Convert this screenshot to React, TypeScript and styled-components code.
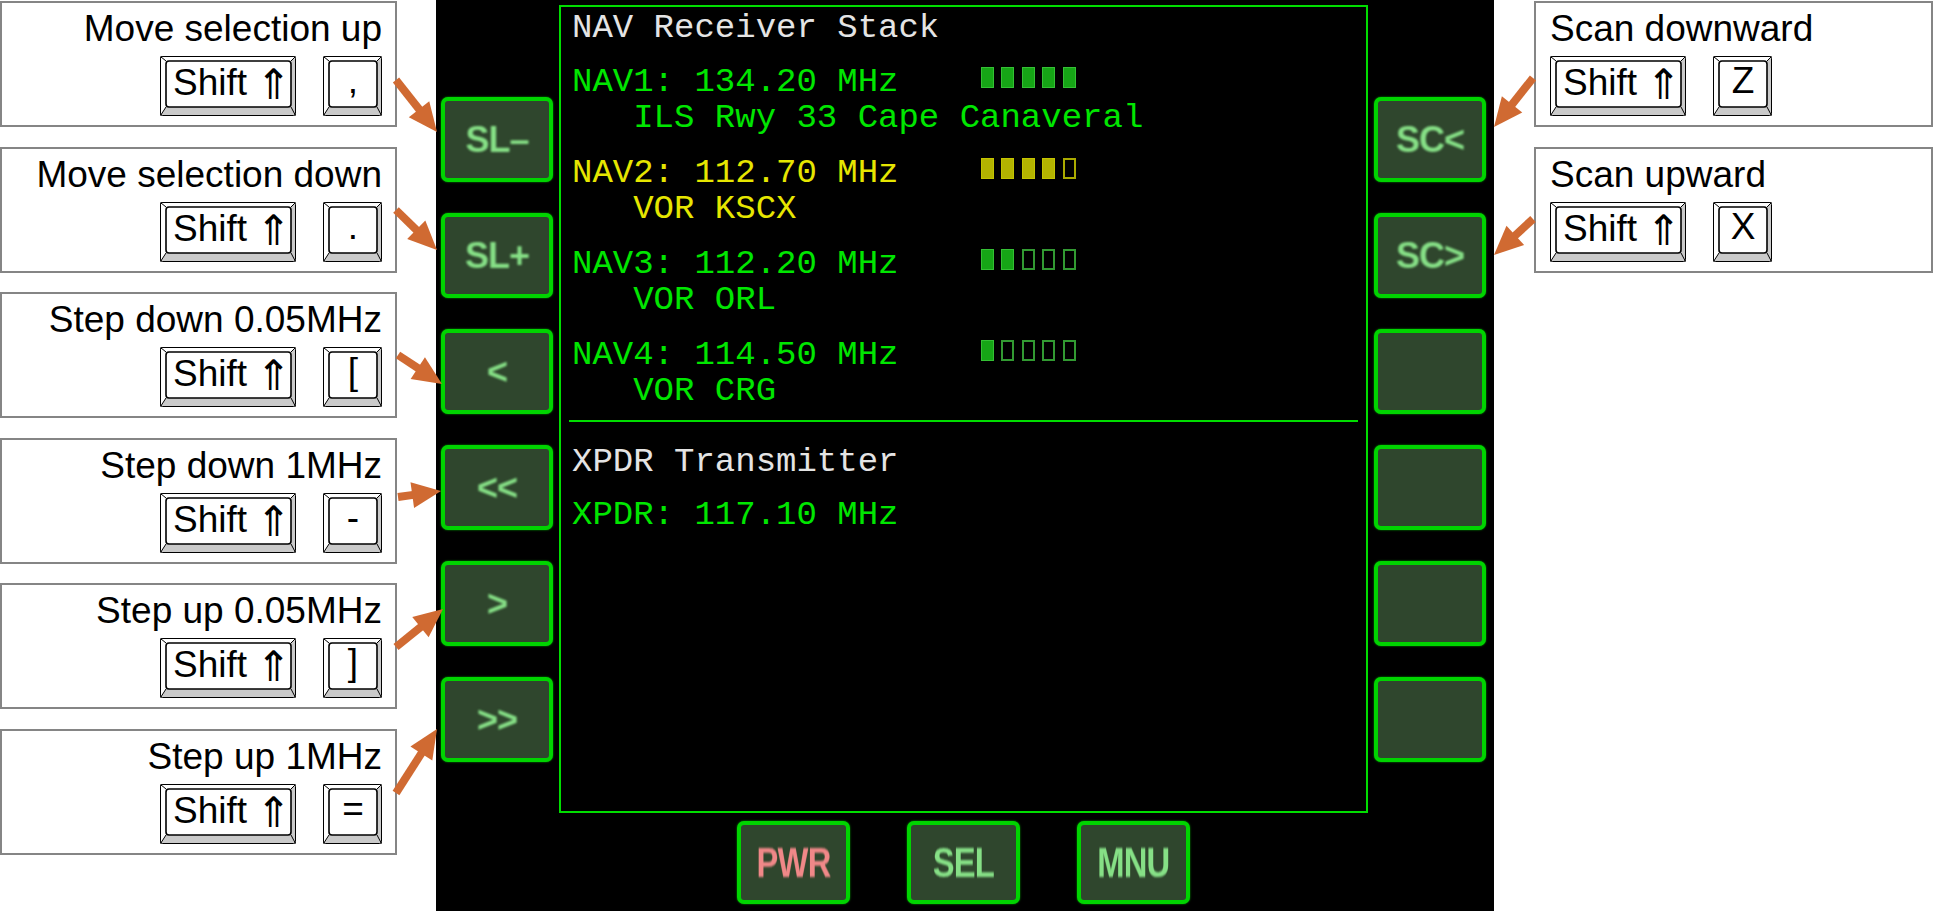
import React from "react";
import styled, { createGlobalStyle } from "styled-components";

const GlobalStyle = createGlobalStyle`
  html, body {
    margin: 0;
    padding: 0;
    background: #fff;
  }
  body {
    width: 1933px;
    height: 911px;
    overflow: hidden;
  }
`;

const Page = styled.div`
  position: relative;
  display: flex;
  width: 1933px;
  height: 911px;
  font-family: "Liberation Sans", Arial, sans-serif;
`;

/* ---------- help boxes ---------- */

const HelpColumn = styled.div<{ $w: number }>`
  flex-shrink: 0;
  display: flex;
  flex-direction: column;
  gap: 19.6px;
  width: ${(p) => p.$w}px;
  padding-top: 1px;
`;

const HelpBox = styled.div<{ $align: "left" | "right" }>`
  box-sizing: border-box;
  height: 126px;
  border: 2px solid #858585;
  padding: 5px ${(p) => (p.$align === "right" ? "13px" : "0")} 0
    ${(p) => (p.$align === "left" ? "14px" : "0")};
  display: flex;
  flex-direction: column;
  align-items: ${(p) => (p.$align === "right" ? "flex-end" : "flex-start")};
`;

const HelpTitle = styled.div`
  font-size: 37px;
  line-height: 42px;
  color: #000;
  white-space: nowrap;
`;

const KeyRow = styled.div`
  display: flex;
  gap: 27px;
  margin-top: 6px;
`;

const KeyWrap = styled.div<{ $w: number }>`
  position: relative;
  flex-shrink: 0;
  width: ${(p) => p.$w}px;
  height: 60px;
`;

const KeyArt = styled.svg`
  position: absolute;
  inset: 0;
`;

const KeyLabel = styled.span<{ $wide: boolean }>`
  position: relative;
  display: flex;
  align-items: baseline;
  justify-content: ${(p) => (p.$wide ? "flex-start" : "center")};
  padding: 3px 5px 0 ${(p) => (p.$wide ? "13px" : "6px")};
  font-size: 37px;
  line-height: 44px;
  color: #000;
  white-space: pre;
`;

const ShiftArrow = styled.span`
  margin-left: 9px;
  font-family: "DejaVu Sans Light", "DejaVu Sans ExtraLight", "DejaVu Sans", sans-serif;
  font-weight: 200;
  font-size: 42px;
  line-height: 44px;
  position: relative;
  top: 4px;
`;

const KeyCap = ({ label, shift }: { label: string; shift?: boolean }) => {
  const w = shift ? 136 : 59;
  const h = 60;
  const l = 6, t = 5, r = 5, b = 9;
  return (
    <KeyWrap $w={w}>
      <KeyArt width={w} height={h} viewBox={`0 0 ${w} ${h}`}>
        <rect x={0.5} y={0.5} width={w - 1} height={h - 1} rx={2} fill="#fff" stroke="#000" />
        <polygon points={`${w},0 ${w - r},${t} ${w - r},${h - b} ${w},${h}`} fill="#cacaca" />
        <polygon points={`0,${h} ${l},${h - b} ${w - r},${h - b} ${w},${h}`} fill="#cacaca" />
        <line x1={0.5} y1={0.5} x2={l} y2={t} stroke="#000" />
        <line x1={w - 0.5} y1={0.5} x2={w - r} y2={t} stroke="#000" />
        <line x1={0.5} y1={h - 0.5} x2={l} y2={h - b} stroke="#000" />
        <line x1={w - 0.5} y1={h - 0.5} x2={w - r} y2={h - b} stroke="#000" />
        <rect x={0.5} y={0.5} width={w - 1} height={h - 1} rx={2} fill="none" stroke="#000" />
        <rect x={l} y={t} width={w - l - r} height={h - t - b} rx={3} fill="#fff" stroke="#000" strokeWidth={1.6} />
      </KeyArt>
      <KeyLabel $wide={!!shift}>
        {label}
        {shift && <ShiftArrow>⇑</ShiftArrow>}
      </KeyLabel>
    </KeyWrap>
  );
};

/* ---------- console ---------- */

const Console = styled.div`
  flex-shrink: 0;
  box-sizing: border-box;
  width: 1058px;
  height: 911px;
  margin: 0 40px 0 39px;
  padding: 5px 8px 0 5px;
  background: #000;
  display: grid;
  grid-template-columns: 112px 809px 112px;
  grid-template-rows: 808px auto;
  column-gap: 6px;
`;

const SideColumn = styled.div`
  display: flex;
  flex-direction: column;
  gap: 31px;
  padding-top: 92px;
`;

const BottomRow = styled.div`
  grid-column: 2;
  display: flex;
  justify-content: center;
  gap: 57px;
  padding-top: 8px;
`;

const PanelButton = styled.div<{ $w: number; $h: number }>`
  box-sizing: border-box;
  width: ${(p) => p.$w}px;
  height: ${(p) => p.$h}px;
  border: 4px solid #00d400;
  border-radius: 7px;
  background: #2f462d;
  box-shadow: 0 0 2px rgba(0, 220, 0, 0.8);
  display: flex;
  align-items: center;
  justify-content: center;
`;

const ButtonLabel = styled.span<{ $red?: boolean; $narrow?: boolean }>`
  display: inline-block;
  font-family: "Liberation Sans", Arial, sans-serif;
  font-weight: bold;
  font-size: ${(p) => (p.$narrow ? 42 : 36)}px;
  line-height: 1;
  letter-spacing: -1px;
  color: ${(p) => (p.$red ? "#f08888" : "#86e086")};
  transform: ${(p) => (p.$narrow ? "scaleX(0.78)" : "none")};
  filter: blur(0.8px);
  white-space: pre;
`;

const Screen = styled.div`
  box-sizing: border-box;
  border: 2px solid #00dd00;
  padding: 3px 11px;
  font-family: "Liberation Mono", "DejaVu Sans Mono", monospace;
  font-size: 34px;
  line-height: 36px;
`;

type Tone = "green" | "yellow" | "white";

const toneColor: Record<Tone, string> = {
  green: "#00e600",
  yellow: "#e6e600",
  white: "#e4e4e4",
};

const NavEntry = styled.div<{ $mt: number }>`
  margin-top: ${(p) => p.$mt}px;
`;

const TextLine = styled.div<{ $tone: Tone; $mt?: number }>`
  display: flex;
  height: 36px;
  margin-top: ${(p) => p.$mt ?? 0}px;
  color: ${(p) => toneColor[p.$tone]};
  white-space: pre;
`;

const Bars = styled.div`
  display: flex;
  align-self: flex-start;
  margin: 3px 0 0 calc(4ch + 1px);
`;

const Bar = styled.span<{ $on: boolean; $yellow: boolean }>`
  box-sizing: border-box;
  width: 13px;
  height: 21px;
  margin-right: calc(1ch - 13px);
  border: ${(p) => (p.$on ? "1.5px" : "2px")} solid
    ${(p) =>
      p.$yellow
        ? p.$on ? "#c4c400" : "#aaaa00"
        : p.$on ? "#34c034" : "#329a32"};
  background: ${(p) =>
    p.$on ? (p.$yellow ? "#b4b400" : "#16a516") : "transparent"};
`;

const Divider = styled.div`
  height: 2px;
  margin: 11px -3px 0;
  background: #00dd00;
`;

/* ---------- arrows ---------- */

const ArrowLayer = styled.svg`
  position: absolute;
  top: 0;
  left: 0;
  pointer-events: none;
`;

const arrows: [number, number, number, number][] = [
  [396, 80, 437, 132],
  [396, 210, 437, 250],
  [398, 355, 442, 384],
  [398, 497, 441, 491],
  [396, 647, 443, 609],
  [396, 793, 437, 729],
  [1533, 78, 1494, 127],
  [1533, 219, 1494, 255],
];

const Arrow = ({ a }: { a: [number, number, number, number] }) => {
  const [x1, y1, x2, y2] = a;
  const len = Math.hypot(x2 - x1, y2 - y1);
  const ux = (x2 - x1) / len;
  const uy = (y2 - y1) / len;
  const hl = 29, hw = 13;
  const bx = x2 - ux * hl;
  const by = y2 - uy * hl;
  return (
    <g fill="#d06a32" stroke="#d06a32">
      <line x1={x1} y1={y1} x2={bx + ux * 3} y2={by + uy * 3} strokeWidth={8} />
      <polygon
        stroke="none"
        points={`${x2},${y2} ${bx - uy * hw},${by + ux * hw} ${bx + uy * hw},${by - ux * hw}`}
      />
    </g>
  );
};

/* ---------- data ---------- */

const leftHelp = [
  { title: "Move selection up", key: "," },
  { title: "Move selection down", key: "." },
  { title: "Step down 0.05MHz", key: "[" },
  { title: "Step down 1MHz", key: "-" },
  { title: "Step up 0.05MHz", key: "]" },
  { title: "Step up 1MHz", key: "=" },
];

const rightHelp = [
  { title: "Scan downward", key: "Z" },
  { title: "Scan upward", key: "X" },
];

const navs: { name: string; freq: string; station: string; level: number; tone: Tone }[] = [
  { name: "NAV1", freq: "134.20", station: "ILS Rwy 33 Cape Canaveral", level: 5, tone: "green" },
  { name: "NAV2", freq: "112.70", station: "VOR KSCX", level: 4, tone: "yellow" },
  { name: "NAV3", freq: "112.20", station: "VOR ORL", level: 2, tone: "green" },
  { name: "NAV4", freq: "114.50", station: "VOR CRG", level: 1, tone: "green" },
];

const leftButtons = ["SL–", "SL+", "<", "<<", ">", ">>"];
const rightButtons = ["SC<", "SC>", "", "", "", ""];

const App = () => {
  return (
    <Page>
      <GlobalStyle />
      <HelpColumn $w={397}>
        {leftHelp.map((h) => (
          <HelpBox key={h.title} $align="right">
            <HelpTitle>{h.title}</HelpTitle>
            <KeyRow>
              <KeyCap label="Shift" shift />
              <KeyCap label={h.key} />
            </KeyRow>
          </HelpBox>
        ))}
      </HelpColumn>

      <Console>
        <SideColumn>
          {leftButtons.map((b) => (
            <PanelButton key={b} $w={112} $h={85}>
              <ButtonLabel>{b}</ButtonLabel>
            </PanelButton>
          ))}
        </SideColumn>

        <Screen>
          <TextLine $tone="white">NAV Receiver Stack</TextLine>
          {navs.map((n, i) => (
            <NavEntry key={n.name} $mt={i === 0 ? 18 : 19}>
              <TextLine $tone={n.tone}>
                {`${n.name}: ${n.freq} MHz`}
                <Bars>
                  {[0, 1, 2, 3, 4].map((k) => (
                    <Bar key={k} $on={k < n.level} $yellow={n.tone === "yellow"} />
                  ))}
                </Bars>
              </TextLine>
              <TextLine $tone={n.tone}>{`   ${n.station}`}</TextLine>
            </NavEntry>
          ))}
          <Divider />
          <TextLine $tone="white" $mt={22}>XPDR Transmitter</TextLine>
          <TextLine $tone="green" $mt={17}>XPDR: 117.10 MHz</TextLine>
        </Screen>

        <SideColumn>
          {rightButtons.map((b, i) => (
            <PanelButton key={i} $w={112} $h={85}>
              <ButtonLabel>{b}</ButtonLabel>
            </PanelButton>
          ))}
        </SideColumn>

        <BottomRow>
          <PanelButton $w={113} $h={83}>
            <ButtonLabel $red $narrow>PWR</ButtonLabel>
          </PanelButton>
          <PanelButton $w={113} $h={83}>
            <ButtonLabel $narrow>SEL</ButtonLabel>
          </PanelButton>
          <PanelButton $w={113} $h={83}>
            <ButtonLabel $narrow>MNU</ButtonLabel>
          </PanelButton>
        </BottomRow>
      </Console>

      <HelpColumn $w={399}>
        {rightHelp.map((h) => (
          <HelpBox key={h.title} $align="left">
            <HelpTitle>{h.title}</HelpTitle>
            <KeyRow>
              <KeyCap label="Shift" shift />
              <KeyCap label={h.key} />
            </KeyRow>
          </HelpBox>
        ))}
      </HelpColumn>

      <ArrowLayer width={1933} height={911} viewBox="0 0 1933 911">
        {arrows.map((a, i) => (
          <Arrow key={i} a={a} />
        ))}
      </ArrowLayer>
    </Page>
  );
};

export default App;
